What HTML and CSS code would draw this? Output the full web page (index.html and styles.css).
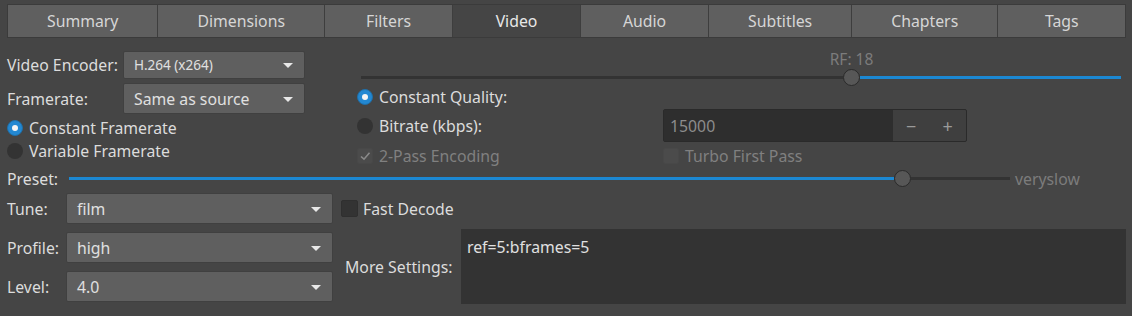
FILE: index.html
```html
<!DOCTYPE html>
<html lang="en">
<head>
    <meta charset="UTF-8">
    <title>Video</title>
    <link rel="stylesheet" href="styles.css">
</head>
<body>
    <div class="tabs">
        <div class="tab">Summary</div>
        <div class="tab">Dimensions</div>
        <div class="tab">Filters</div>
        <div class="tab active">Video</div>
        <div class="tab">Audio</div>
        <div class="tab">Subtitles</div>
        <div class="tab">Chapters</div>
        <div class="tab">Tags</div>
    </div>

    <div class="top">
        <div class="left">
            <div class="field encoder">
                <span class="label">Video Encoder:</span>
                <div class="combo small">H.264 (x264)</div>
            </div>
            <div class="field framerate">
                <span class="label">Framerate:</span>
                <div class="combo">Same as source</div>
            </div>
            <label class="radio-row first"><span class="radio checked"></span>Constant Framerate</label>
            <label class="radio-row second"><span class="radio"></span>Variable Framerate</label>
        </div>

        <div class="right">
            <div class="rf-wrap">
                <div class="slider">
                    <div class="track" style="flex-grow: 482"></div>
                    <div class="thumb">
                        <span class="thumb-label">RF: 18</span>
                    </div>
                    <div class="track fill" style="flex-grow: 261"></div>
                </div>
            </div>
            <label class="radio-row cq"><span class="radio checked"></span>Constant Quality:</label>
            <div class="bitrate-row">
                <label class="radio-row bitrate"><span class="radio"></span>Bitrate (kbps):</label>
                <div class="spin">
                    <span class="spin-value">15000</span>
                    <span class="spin-btn">&minus;</span>
                    <span class="spin-btn">+</span>
                </div>
            </div>
            <div class="check-row-wrap">
                <label class="check-row disabled twopass"><span class="check checked">
                    <svg width="12" height="12" viewBox="0 0 12 12"><path d="M2 6.5 L5 9.2 L10.5 2.8" fill="none" stroke="#8a8a8a" stroke-width="1.6"/></svg>
                </span>2-Pass Encoding</label>
                <label class="check-row disabled"><span class="check dim"></span>Turbo First Pass</label>
            </div>
        </div>
    </div>

    <div class="preset">
        <span class="preset-label">Preset:</span>
        <div class="slider">
            <div class="track fill" style="flex-grow: 825"></div>
            <div class="thumb"></div>
            <div class="track" style="flex-grow: 99"></div>
        </div>
        <span class="preset-value">veryslow</span>
    </div>

    <div class="bottom">
        <span class="label">Tune:</span>
        <div class="combo">film</div>
        <label class="check-row fast"><span class="check"></span>Fast Decode</label>

        <span class="label">Profile:</span>
        <div class="combo">high</div>
        <span class="more-label">More Settings:</span>
        <div class="more-box">ref=5:bframes=5</div>

        <span class="label">Level:</span>
        <div class="combo">4.0</div>
    </div>
</body>
</html>
```

FILE: styles.css
```css
body {
    margin: 0;
    padding: 4px 6px 0 7px;
    background: #454545;
    color: #dcdcdc;
    font-family: "Noto Sans", "DejaVu Sans", sans-serif;
    font-size: 15.8px;
    height: 316px;
    box-sizing: border-box;
    overflow: hidden;
}

/* tabs */
.tabs {
    display: flex;
    height: 34px;
    border: 1px solid #3b3b3b;
    box-sizing: border-box;
}

.tab {
    flex: 0 0 auto;
    min-width: 128px;
    padding: 0 39px;
    box-sizing: border-box;
    background: #5f5f5f;
    border-left: 1px solid #3e3e3e;
    display: flex;
    align-items: center;
    justify-content: center;
    color: #d6d6d6;
}

.tab:first-child {
    border-left: none;
}

.tab:last-child {
    flex-grow: 1;
}

.tab.active {
    background: #454545;
    color: #e8e8e8;
}

/* top area */
.top {
    display: flex;
    padding-top: 13px;
}

.left {
    width: 298px;
}

.field {
    display: flex;
    align-items: center;
}

.field .label {
    width: 116px;
}

.encoder {
    height: 28px;
}

.framerate {
    height: 31px;
    margin-top: 4px;
}

.combo {
    position: relative;
    flex: 1;
    height: 100%;
    background: #5f5f5f;
    border: 1px solid #404040;
    border-radius: 2px;
    box-sizing: border-box;
    padding-left: 10px;
    display: flex;
    align-items: center;
    color: #e0e0e0;
}

.combo.small {
    font-size: 13.5px;
}

.combo::after {
    content: "";
    position: absolute;
    right: 11px;
    top: 50%;
    margin-top: -2px;
    border-left: 5px solid transparent;
    border-right: 5px solid transparent;
    border-top: 5px solid #e8e8e8;
}

.radio-row {
    display: flex;
    align-items: center;
    height: 16px;
}

.radio-row.first {
    margin-top: 6px;
}

.radio-row.second {
    margin-top: 7px;
}

.radio {
    width: 16px;
    height: 16px;
    border-radius: 50%;
    background: #333;
    box-sizing: border-box;
    margin-right: 6px;
    flex: 0 0 auto;
}

.radio.checked {
    background: #2388d2;
    border: 1px solid #1f6fa8;
    position: relative;
}

.radio.checked::after {
    content: "";
    position: absolute;
    left: 4px;
    top: 4px;
    width: 6px;
    height: 6px;
    border-radius: 50%;
    background: #f4f4f4;
}

.right {
    flex: 1;
    margin-left: 52px;
}

.rf-wrap {
    height: 35px;
    padding-top: 18px;
    box-sizing: border-box;
    padding-left: 4px;
    margin-right: 5px;
}

.slider {
    display: flex;
    align-items: center;
    height: 17px;
}

.track {
    height: 3px;
    background: #333;
}

.track.fill {
    background: #1c88d2;
}

.thumb {
    position: relative;
    width: 17px;
    height: 17px;
    border-radius: 50%;
    background: #575757;
    border: 1px solid #2a2a2a;
    box-sizing: border-box;
    flex: 0 0 auto;
}

.thumb-label {
    position: absolute;
    bottom: 15px;
    left: 50%;
    transform: translateX(-50%);
    white-space: nowrap;
    color: #7c7c7c;
    font-size: 15.5px;
}

.radio-row.cq {
    margin-top: 3px;
}

.bitrate-row {
    display: flex;
    align-items: center;
    height: 33px;
    margin-top: 4px;
}

.radio-row.bitrate {
    width: 306px;
}

.spin {
    display: flex;
    width: 304px;
    height: 33px;
    border: 1px solid #2a2a2a;
    border-radius: 2px;
    box-sizing: border-box;
    background: #3f3f3f;
}

.spin-value {
    width: 229px;
    background: #2e2e2e;
    color: #8c8c8c;
    display: flex;
    align-items: center;
    padding-left: 6px;
    box-sizing: border-box;
}

.spin-btn {
    flex: 1;
    display: flex;
    align-items: center;
    justify-content: center;
    color: #9a9a9a;
    font-size: 18px;
}

.check-row-wrap {
    display: flex;
    margin-top: 6px;
}

.check-row {
    display: flex;
    align-items: center;
    height: 16px;
}

.check-row.twopass {
    width: 306px;
}

.check-row.disabled {
    color: #808080;
}

.check {
    width: 16px;
    height: 16px;
    border-radius: 2px;
    background: #333;
    border: 1px solid #2f2f2f;
    box-sizing: border-box;
    margin-right: 6px;
    display: flex;
    align-items: center;
    justify-content: center;
    flex: 0 0 auto;
}

.check.checked,
.check.dim {
    background: #4b4b4b;
    border-color: #484848;
}

/* preset */
.preset {
    display: flex;
    align-items: center;
    height: 17px;
    margin-top: 6px;
}

.preset-label {
    width: 62px;
}

.preset .slider {
    flex: 1;
}

.preset-value {
    width: 116px;
    padding-left: 5px;
    box-sizing: border-box;
    color: #7c7c7c;
}

/* bottom grid */
.bottom {
    display: grid;
    grid-template-columns: 59px 267px 128px 1fr;
    grid-template-rows: 31px 31px 31px;
    row-gap: 8px;
    margin-top: 6px;
}

.bottom .label {
    display: flex;
    align-items: center;
}

.fast {
    grid-column: 3 / 5;
    align-self: center;
    padding-left: 8px;
}

.fast .check {
    width: 17px;
    height: 17px;
    margin-right: 5px;
}

.more-label {
    grid-column: 3;
    grid-row: 2 / 4;
    align-self: center;
    padding-left: 12px;
}

.more-box {
    grid-column: 4;
    grid-row: 2 / 4;
    margin-top: -3px;
    margin-bottom: -2px;
    background: #333;
    padding: 7px 6px;
    color: #e0e0e0;
}
```
